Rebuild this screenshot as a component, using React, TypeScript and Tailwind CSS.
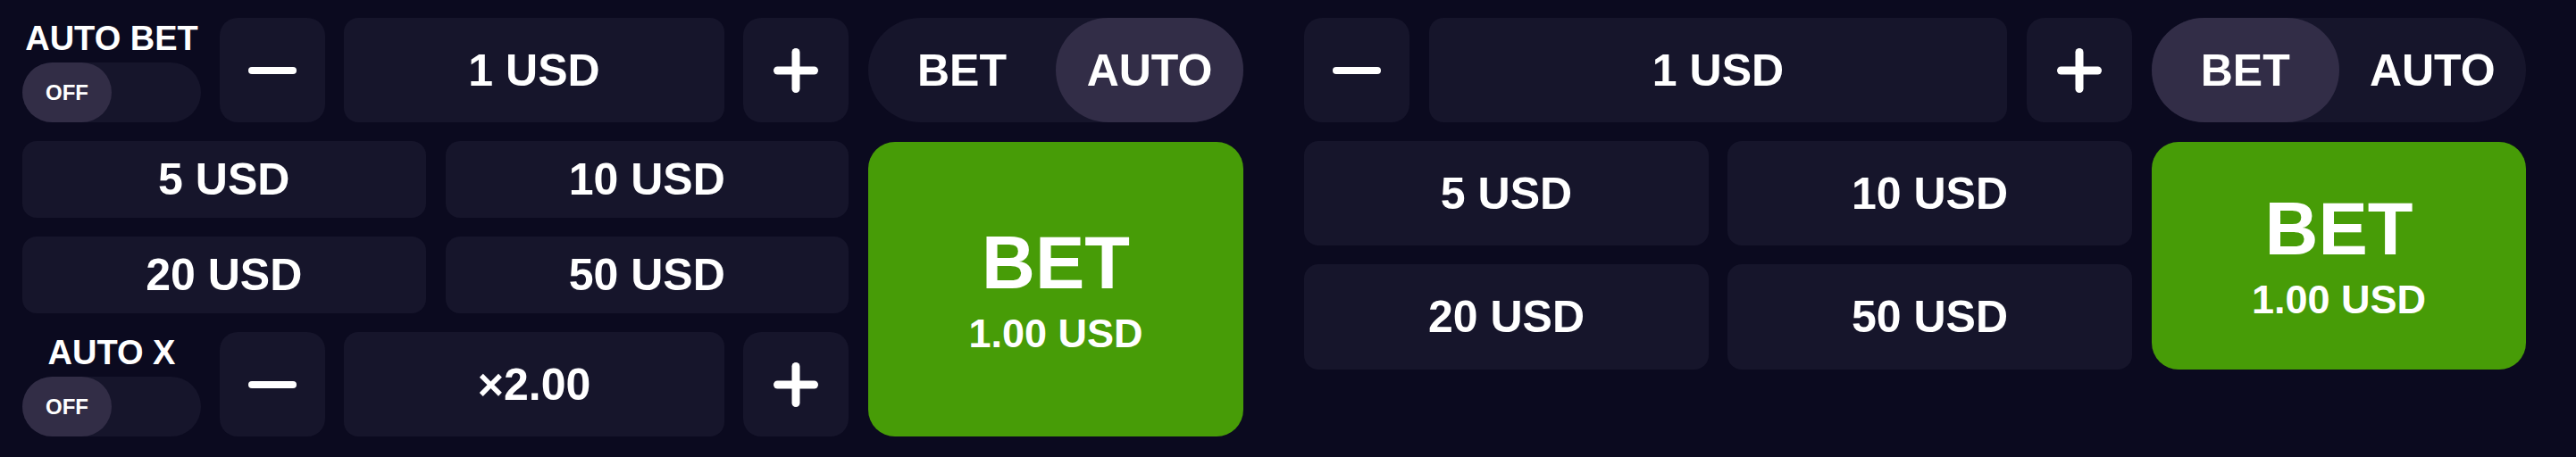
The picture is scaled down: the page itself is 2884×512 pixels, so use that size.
import { useState } from "react";

type Mode = "bet" | "auto";

const PRESETS = [5, 10, 20, 50];

const MinusIcon = (): JSX.Element => (
  <svg width="54" height="8" viewBox="0 0 54 8" aria-hidden="true">
    <line x1="4" y1="4" x2="50" y2="4" stroke="white" strokeWidth="8" strokeLinecap="round" />
  </svg>
);

const PlusIcon = (): JSX.Element => (
  <svg width="50" height="50" viewBox="0 0 50 50" aria-hidden="true">
    <line x1="4.5" y1="25" x2="45.5" y2="25" stroke="white" strokeWidth="9" strokeLinecap="round" />
    <line x1="25" y1="4.5" x2="25" y2="45.5" stroke="white" strokeWidth="9" strokeLinecap="round" />
  </svg>
);

const OffToggle = ({ label }: { label: string }): JSX.Element => {
  const [on, setOn] = useState(false);
  return (
    <div className="flex w-[200px] shrink-0 flex-col items-center justify-end gap-[8px]">
      <span className="text-[38px] font-bold leading-none text-white">{label}</span>
      <button
        type="button"
        onClick={(): void => setOn(!on)}
        className={`flex h-[67px] w-[200px] rounded-full bg-[#16152b] ${on ? "justify-end" : "justify-start"}`}
      >
        <span className="flex h-full w-[100px] items-center justify-center rounded-full bg-[#322d46] text-[24px] font-bold text-white">
          {on ? "ON" : "OFF"}
        </span>
      </button>
    </div>
  );
};

const StepButton = ({
  kind,
  onClick,
}: {
  kind: "minus" | "plus";
  onClick: () => void;
}): JSX.Element => (
  <button
    type="button"
    onClick={onClick}
    className="flex h-full w-[118px] shrink-0 items-center justify-center rounded-[20px] bg-[#16152b]"
  >
    {kind === "minus" ? <MinusIcon /> : <PlusIcon />}
  </button>
);

const ValueBox = ({ text }: { text: string }): JSX.Element => (
  <div className="flex h-full flex-1 items-center justify-center rounded-[16px] bg-[#16152b] text-[50px] font-bold leading-none text-white">
    {text}
  </div>
);

const PresetButton = ({ value, onPick }: { value: number; onPick: (v: number) => void }): JSX.Element => (
  <button
    type="button"
    onClick={(): void => onPick(value)}
    className="flex h-full items-center justify-center rounded-[16px] bg-[#16152b] text-[50px] font-bold leading-none text-white"
  >
    {value} USD
  </button>
);

const ModeSwitch = ({ mode, setMode }: { mode: Mode; setMode: (m: Mode) => void }): JSX.Element => (
  <div className="flex h-[117px] shrink-0 rounded-full bg-[#16152b]">
    <button
      type="button"
      onClick={(): void => setMode("bet")}
      className={`flex flex-1 items-center justify-center rounded-full text-[50px] font-bold leading-none text-white ${
        mode === "bet" ? "bg-[#322d47]" : ""
      }`}
    >
      BET
    </button>
    <button
      type="button"
      onClick={(): void => setMode("auto")}
      className={`flex flex-1 items-center justify-center rounded-full text-[50px] font-bold leading-none text-white ${
        mode === "auto" ? "bg-[#322d47]" : ""
      }`}
    >
      AUTO
    </button>
  </div>
);

const BetButton = ({ amount }: { amount: number }): JSX.Element => (
  <button
    type="button"
    className="flex flex-1 flex-col items-center justify-center rounded-[30px] bg-[#479c07] text-white"
  >
    <span className="text-[83px] font-bold leading-none">BET</span>
    <span className="mt-[15px] text-[45px] font-bold leading-none">{amount.toFixed(2)} USD</span>
  </button>
);

const AutoPanel = (): JSX.Element => {
  const [amount, setAmount] = useState(1);
  const [autoX, setAutoX] = useState(2);
  const [mode, setMode] = useState<Mode>("auto");

  return (
    <div className="grid w-[1367px] shrink-0 grid-cols-[1fr_420px] gap-x-[22px]">
      <div className="flex flex-col gap-[21px]">
        <div className="flex h-[117px] gap-[21px]">
          <OffToggle label="AUTO BET" />
          <StepButton kind="minus" onClick={(): void => setAmount(Math.max(1, amount - 1))} />
          <ValueBox text={`${amount} USD`} />
          <StepButton kind="plus" onClick={(): void => setAmount(amount + 1)} />
        </div>
        <div className="grid h-[86px] grid-cols-2 gap-[22px]">
          <PresetButton value={PRESETS[0]} onPick={setAmount} />
          <PresetButton value={PRESETS[1]} onPick={setAmount} />
        </div>
        <div className="grid h-[86px] grid-cols-2 gap-[22px]">
          <PresetButton value={PRESETS[2]} onPick={setAmount} />
          <PresetButton value={PRESETS[3]} onPick={setAmount} />
        </div>
        <div className="flex h-[117px] gap-[21px]">
          <OffToggle label="AUTO X" />
          <StepButton kind="minus" onClick={(): void => setAutoX(Math.max(1.01, autoX - 0.5))} />
          <ValueBox text={`×${autoX.toFixed(2)}`} />
          <StepButton kind="plus" onClick={(): void => setAutoX(autoX + 0.5)} />
        </div>
      </div>
      <div className="flex flex-col gap-[22px]">
        <ModeSwitch mode={mode} setMode={setMode} />
        <BetButton amount={amount} />
      </div>
    </div>
  );
};

const ManualPanel = (): JSX.Element => {
  const [amount, setAmount] = useState(1);
  const [mode, setMode] = useState<Mode>("bet");

  return (
    <div className="grid w-[1368px] shrink-0 grid-cols-[1fr_419px] gap-x-[22px]">
      <div className="flex flex-col gap-[21px]">
        <div className="flex h-[117px] gap-[22px]">
          <StepButton kind="minus" onClick={(): void => setAmount(Math.max(1, amount - 1))} />
          <ValueBox text={`${amount} USD`} />
          <StepButton kind="plus" onClick={(): void => setAmount(amount + 1)} />
        </div>
        <div className="grid h-[117px] grid-cols-2 gap-[21px]">
          <PresetButton value={PRESETS[0]} onPick={setAmount} />
          <PresetButton value={PRESETS[1]} onPick={setAmount} />
        </div>
        <div className="grid h-[118px] grid-cols-2 gap-[21px]">
          <PresetButton value={PRESETS[2]} onPick={setAmount} />
          <PresetButton value={PRESETS[3]} onPick={setAmount} />
        </div>
      </div>
      <div className="flex flex-col gap-[22px]">
        <ModeSwitch mode={mode} setMode={setMode} />
        <BetButton amount={amount} />
      </div>
    </div>
  );
};

const App = (): JSX.Element => (
  <div className="flex h-[512px] w-full items-start gap-[68px] bg-[#0b0a1f] pl-[25px] pt-[20px] font-['Liberation_Sans',Arial,sans-serif]">
    <AutoPanel />
    <ManualPanel />
  </div>
);

export default App;
